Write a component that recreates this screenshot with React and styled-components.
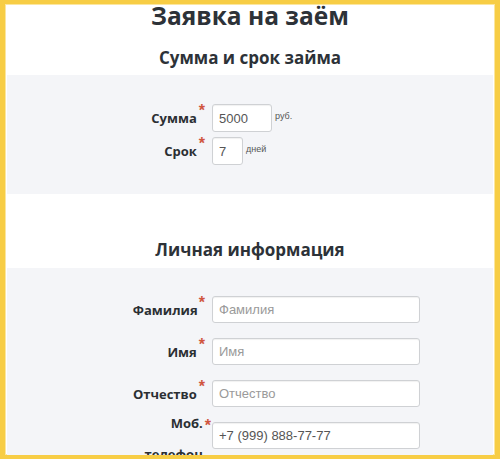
import styled, { createGlobalStyle } from 'styled-components';

const GlobalStyle = createGlobalStyle`
  html, body {
    margin: 0;
    padding: 0;
    background: #ffffff;
  }
  * {
    box-sizing: border-box;
  }
`;

const Frame = styled.div`
  width: 500px;
  height: 459px;
  overflow: hidden;
  background: #ffffff;
  border-style: solid;
  border-color: #f7cd45;
  border-width: 4px 5px 4px 5px;
  padding: 0 2px;
  box-shadow: inset 0 0 0 1px #fbe6a0;
  font-family: 'Open Sans', 'Liberation Sans', sans-serif;
  color: #2d3238;
`;

const Title = styled.h1`
  margin: 0;
  font-size: 24.5px;
  line-height: 24px;
  font-weight: 700;
  text-align: center;
`;

const SectionTitle = styled.h2`
  margin: ${({ $top }) => $top}px 0 ${({ $bottom }) => $bottom}px;
  font-size: 17px;
  line-height: 20px;
  font-weight: 700;
  text-align: center;
`;

const Section = styled.div`
  background: #f4f5f8;
  padding: ${({ $pad }) => $pad};
  display: flex;
  flex-direction: column;
  gap: ${({ $gap }) => $gap}px;
`;

const Row = styled.div`
  display: grid;
  grid-template-columns: 198px auto;
  grid-template-rows: ${({ $h }) => $h}px;
  column-gap: 7px;
  align-items: center;
`;

const Label = styled.label`
  justify-self: end;
  margin-right: ${({ $shift }) => $shift || 0}px;
  margin-top: ${({ $drop }) => $drop || 0}px;
  text-align: right;
  font-size: 13px;
  font-weight: 700;
  line-height: ${({ $lh }) => $lh || 20}px;
  color: #2b2f33;
  display: flex;
  align-items: center;
`;

const LabelText = styled.span`
  max-width: 64px;
  display: block;
`;

const Required = styled.span`
  align-self: flex-start;
  margin-left: 2px;
  margin-top: ${({ $top }) => $top}px;
  color: #d0553f;
  font-family: 'Liberation Sans', sans-serif;
  font-size: 16px;
  line-height: 10px;
  font-weight: 700;
`;

const Field = styled.div`
  display: flex;
  align-items: center;
  gap: 3px;
`;

const Input = styled.input`
  width: ${({ $w }) => $w}px;
  height: ${({ $h }) => $h}px;
  padding: 0 6px;
  border: 1px solid #cfd1d4;
  border-radius: 3px;
  background: #ffffff;
  box-shadow: inset 0 1px 1px rgba(0, 0, 0, 0.06);
  font-family: 'Liberation Sans', Arial, sans-serif;
  font-size: 13px;
  color: #555555;
  outline: none;

  &::placeholder {
    color: #9a9a9a;
  }
`;

const Unit = styled.span`
  font-family: 'Liberation Sans', Arial, sans-serif;
  font-size: 9px;
  color: #555555;
  margin-top: -4px;
`;

const loan = [
  { label: 'Сумма', value: '5000', width: 60, unit: 'руб.' },
  { label: 'Срок', value: '7', width: 31, unit: 'дней' },
];

const personal = [
  { label: 'Фамилия', placeholder: 'Фамилия' },
  { label: 'Имя', placeholder: 'Имя' },
  { label: 'Отчество', placeholder: 'Отчество' },
  {
    label: 'Моб. телефон',
    value: '+7 (999) 888-77-77',
    lh: 31,
    drop: 6,
    star: 13,
    shift: -6,
  },
];

const App = () => (
  <>
    <GlobalStyle />
    <Frame>
      <Title>Заявка на заём</Title>
      <SectionTitle $top={20} $bottom={7}>
        Сумма и срок займа
      </SectionTitle>
      <Section $pad="29px 0 29px" $gap={5}>
        {loan.map((item) => (
          <Row key={item.label} $h={28}>
            <Label>
              <LabelText>{item.label}</LabelText>
              <Required $top={-2}>*</Required>
            </Label>
            <Field>
              <Input $w={item.width} $h={28} defaultValue={item.value} />
              <Unit>{item.unit}</Unit>
            </Field>
          </Row>
        ))}
      </Section>
      <SectionTitle $top={46} $bottom={8}>
        Личная информация
      </SectionTitle>
      <Section $pad="28px 0 20px" $gap={15}>
        {personal.map((item) => (
          <Row key={item.label} $h={27}>
            <Label $lh={item.lh} $shift={item.shift} $drop={item.drop}>
              <LabelText>{item.label}</LabelText>
              <Required $top={item.star ?? -2}>*</Required>
            </Label>
            <Field>
              <Input
                $w={208}
                $h={27}
                placeholder={item.placeholder}
                defaultValue={item.value}
              />
            </Field>
          </Row>
        ))}
      </Section>
    </Frame>
  </>
);

export default App;
